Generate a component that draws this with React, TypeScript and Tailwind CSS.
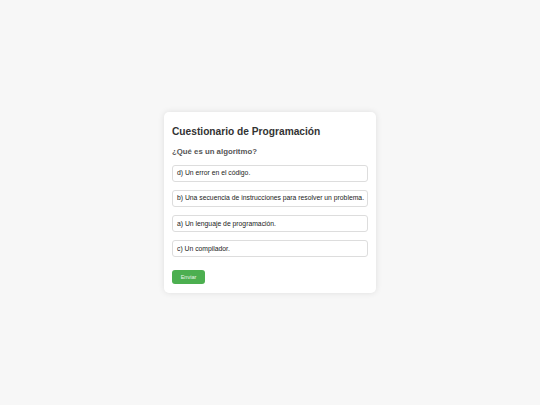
import React, { useState } from 'react';

const options = [
  'd) Un error en el código.',
  'b) Una secuencia de instrucciones para resolver un problema.',
  'a) Un lenguaje de programación.',
  'c) Un compilador.',
];

export default function App() {
  const [selected, setSelected] = useState<number | null>(null);

  return (
    <div
      className="min-h-screen bg-[#f7f7f7] flex items-center justify-center"
      style={{ fontFamily: '"Liberation Sans", Arial, sans-serif' }}
    >
      <div className="w-[212px] bg-white rounded-[5px] shadow-[0_0_6px_rgba(0,0,0,0.1)] px-[8px] pt-[14px] pb-[8.4px]">
        <h1 className="text-[10.2px] leading-[12px] font-bold text-[#333] mb-[8px]">
          Cuestionario de Programación
        </h1>
        <h2 className="text-[7.8px] leading-[11px] font-bold text-[#555] mb-[7.5px]">
          ¿Qué es un algoritmo?
        </h2>
        <div className="flex flex-col gap-[8.2px]">
          {options.map((opt, i) => (
            <button
              key={i}
              onClick={() => setSelected(i)}
              className={`h-[17px] text-left px-[4px] text-[6.8px] text-[#222] border rounded-[3px] whitespace-nowrap ${
                selected === i ? 'border-[#4caf50] bg-[#f0faf0]' : 'border-[#dddddd] bg-white'
              }`}
            >
              {opt}
            </button>
          ))}
        </div>
        <button className="block mt-[12.5px] w-[33px] h-[14.5px] bg-[#4caf50] text-[#e8f5e8] text-[5.5px] rounded-[3px]">
          Enviar
        </button>
      </div>
    </div>
  );
}
